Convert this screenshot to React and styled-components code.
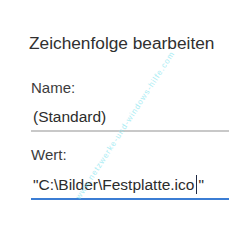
import React from 'react';
import styled, { createGlobalStyle } from 'styled-components';

const Global = createGlobalStyle`
  html, body {
    margin: 0;
    padding: 0;
    background: #ffffff;
  }
  body {
    font-family: "Liberation Sans", Arial, sans-serif;
  }
`;

const Page = styled.div`
  position: relative;
  width: 250px;
  height: 250px;
  overflow: hidden;
  background: #fff;
  padding: 33px 21px 0 29px;
  box-sizing: border-box;
`;

const Title = styled.h1`
  margin: 0 0 26px 0;
  font-size: 17.3px;
  font-weight: normal;
  color: #303030;
  line-height: 20px;
`;

const Field = styled.div`
  display: flex;
  flex-direction: column;
  padding-left: 2px;
  margin-bottom: ${p => p.gap || 0}px;
`;

const Label = styled.label`
  font-size: 15px;
  line-height: 18px;
  color: #3c3c3c;
  margin-bottom: 11px;
`;

const Value = styled.div`
  display: flex;
  align-items: center;
  padding: 0 0 4px 2px;
  font-size: 15.5px;
  line-height: 18px;
  color: #2c2c2c;
  border-bottom: 2px solid ${p => (p.active ? '#3b7dd4' : '#c8c8c8')};
`;

const Caret = styled.span`
  display: inline-block;
  width: 1px;
  height: 19px;
  background: #1f2a44;
  margin: 0 1px 0 2px;
`;

// faint diagonal watermark over the dialog
const Watermark = styled.div`
  position: absolute;
  left: 38px;
  top: 121px;
  width: 174px;
  text-align: center;
  font-size: 8px;
  letter-spacing: 1px;
  color: #86e6f0;
  white-space: nowrap;
  transform: rotate(-57deg);
  opacity: 0.7;
`;

export default function App() {
  return (
    <>
      <Global />
      <Page>
        <Title>Zeichenfolge bearbeiten</Title>
        <Field gap={14}>
          <Label>Name:</Label>
          <Value>(Standard)</Value>
        </Field>
        <Field>
          <Label>Wert:</Label>
          <Value active>
            "C:\Bilder\Festplatte.ico<Caret />"
          </Value>
        </Field>
        <Watermark>www.netzwerke-und-windows-hilfe.com</Watermark>
      </Page>
    </>
  );
}
